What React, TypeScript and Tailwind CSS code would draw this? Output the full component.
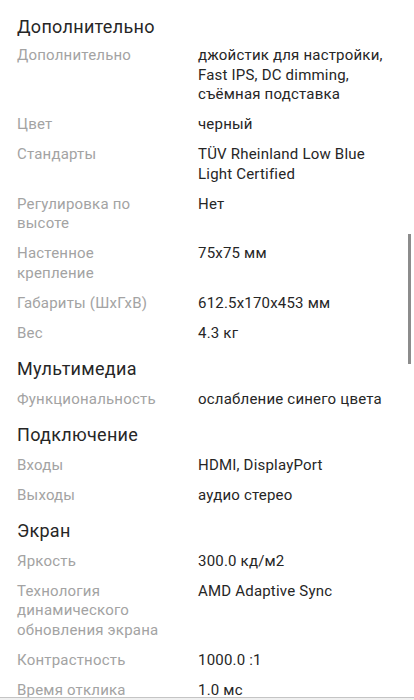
type Row = { label: string; value: string };
type Section = { title: string; rows: Row[] };

const SECTIONS: Section[] = [
  {
    title: "Дополнительно",
    rows: [
      { label: "Дополнительно", value: "джойстик для настройки, Fast IPS, DC dimming, съёмная подставка" },
      { label: "Цвет", value: "черный" },
      { label: "Стандарты", value: "TÜV Rheinland Low Blue Light Certified" },
      { label: "Регулировка по высоте", value: "Нет" },
      { label: "Настенное крепление", value: "75x75 мм" },
      { label: "Габариты (ШхГхВ)", value: "612.5x170x453 мм" },
      { label: "Вес", value: "4.3 кг" },
    ],
  },
  {
    title: "Мультимедиа",
    rows: [{ label: "Функциональность", value: "ослабление синего цвета" }],
  },
  {
    title: "Подключение",
    rows: [
      { label: "Входы", value: "HDMI, DisplayPort" },
      { label: "Выходы", value: "аудио стерео" },
    ],
  },
  {
    title: "Экран",
    rows: [
      { label: "Яркость", value: "300.0 кд/м2" },
      { label: "Технология динамического обновления экрана", value: "AMD Adaptive Sync" },
      { label: "Контрастность", value: "1000.0 :1" },
      { label: "Время отклика", value: "1.0 мс" },
    ],
  },
];

export default function App() {
  return (
    <div
      className="relative h-[700px] w-[414px] overflow-hidden bg-white"
      style={{ fontFamily: "Roboto, 'Noto Sans', sans-serif" }}
    >
      <div className="px-[17px] pt-[5px]">
        {SECTIONS.map((section, i) => (
          <section key={section.title}>
            <h2
              className={
                i === 0
                  ? "pt-[10px] pb-[2px] text-[18px] leading-[24px] tracking-[0.3px] text-[#262626]"
                  : "pt-[8px] pb-[4px] text-[18px] leading-[24px] tracking-[0.3px] text-[#262626]"
              }
            >
              {section.title}
            </h2>
            {section.rows.map((row) => (
              <div key={row.label} className="flex py-[5.25px] text-[15px] leading-[19.5px] tracking-[0.2px]">
                <div className="w-[150px] shrink-0 text-[#a3a3a3]">{row.label}</div>
                <div className="ml-[31px] flex-1 text-[#262626]">{row.value}</div>
              </div>
            ))}
          </section>
        ))}
      </div>

      {/* scrollbar */}
      <div className="absolute left-[408px] top-[234px] h-[130px] w-[3px] bg-[#8c8c8c]" />

      {/* bottom bar edge */}
      <div className="absolute left-0 top-[697px] h-[3px] w-full border-t border-[#c4c4c4] bg-[#f0f0f0]" />
    </div>
  );
}
